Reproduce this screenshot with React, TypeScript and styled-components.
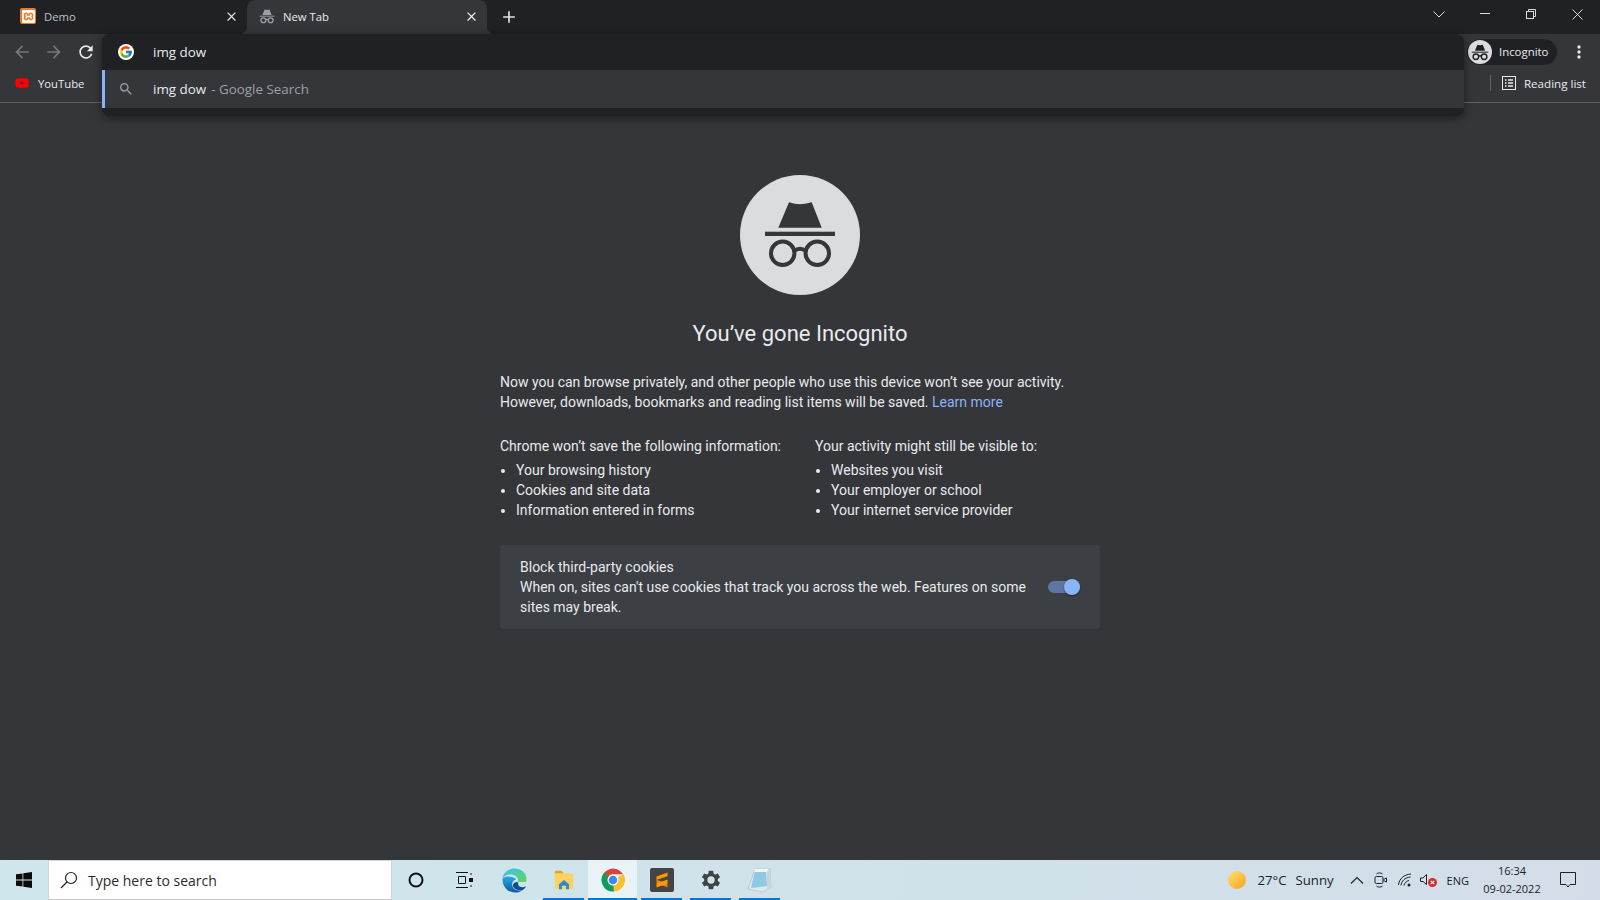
import React from "react";
import styled, { createGlobalStyle } from "styled-components";
import { SiXampp } from "react-icons/si";
import { FcGoogle } from "react-icons/fc";
import { FaYoutube } from "react-icons/fa";

const GlobalStyle = createGlobalStyle`
  html, body { margin: 0; padding: 0; background: #35363a; }
  body { font-family: Roboto, "Liberation Sans", sans-serif; overflow: hidden; }
  * { box-sizing: border-box; }
`;

const Screen = styled.div`
  position: relative;
  width: 1600px;
  height: 900px;
  display: flex;
  flex-direction: column;
  background: #35363a;
`;

/* ---------- tab strip ---------- */
const TabStrip = styled.div`
  height: 34px;
  background: #202124;
  display: flex;
  align-items: stretch;
  padding-left: 7px;
  color: #e8eaed;
  font-family: "Open Sans", "Noto Sans", sans-serif;
  font-size: 11.3px;
`;

const Tab = styled.div<{ $active?: boolean }>`
  position: relative;
  width: 240px;
  display: flex;
  align-items: center;
  padding: 0 8px 2px 13px;
  gap: 8px;
  border-radius: 8px 8px 0 0;
  color: ${(p) => (p.$active ? "#e8eaed" : "#bdc1c6")};
  background: ${(p) => (p.$active ? "#35363a" : "transparent")};
  ${(p) =>
    p.$active &&
    `
    padding-left: 12px;
    &::before, &::after {
      content: "";
      position: absolute;
      bottom: 0;
      width: 8px;
      height: 8px;
    }
    &::before { left: -8px; background: radial-gradient(circle at 0 0, #202124 8px, #35363a 8.5px); }
    &::after { right: -8px; background: radial-gradient(circle at 100% 0, #202124 8px, #35363a 8.5px); }
  `}
`;

const TabTitle = styled.span`
  flex: 1;
  white-space: nowrap;
`;

const TabIcon = styled.span<{ $tint?: string }>`
  width: 16px;
  height: 16px;
  display: flex;
  align-items: center;
  justify-content: center;
  flex: none;
  color: ${(p) => p.$tint || "#9aa0a6"};
`;

const XamppBadge = styled.span`
  width: 16px;
  height: 16px;
  border-radius: 2px;
  background: #f0762b;
  color: #fff;
  display: flex;
  align-items: center;
  justify-content: center;
`;

const NewTabButton = styled.div`
  width: 28px;
  margin-left: 8px;
  padding-bottom: 1px;
  display: flex;
  align-items: center;
  justify-content: center;
  color: #dfe1e5;
`;

const WindowControls = styled.div`
  margin-left: auto;
  display: flex;
  align-items: flex-start;
`;

const WindowButton = styled.div`
  width: 46px;
  height: 28px;
  display: flex;
  align-items: center;
  justify-content: center;
  color: #dadce0;
`;

/* ---------- toolbar ---------- */
const Toolbar = styled.div`
  height: 36px;
  display: flex;
  align-items: center;
  padding-left: 6px;
  color: #e8eaed;
`;

const NavButton = styled.div<{ $dim?: boolean }>`
  width: 32px;
  height: 28px;
  display: flex;
  align-items: center;
  justify-content: center;
  color: ${(p) => (p.$dim ? "#74777b" : "#e8eaed")};
`;

const ToolbarEnd = styled.div`
  margin-left: auto;
  display: flex;
  align-items: center;
  gap: 8px;
  padding-right: 7px;
`;

const ProfilePill = styled.div`
  width: 90px;
  height: 26px;
  border-radius: 13px;
  background: #202124;
  display: flex;
  align-items: center;
  gap: 7px;
  padding: 0 0 1px 1px;
  font-family: "Open Sans", "Noto Sans", sans-serif;
  font-size: 11.4px;
  color: #e8eaed;
`;

const ProfileAvatar = styled.span`
  width: 24px;
  height: 24px;
  margin-top: 1px;
  border-radius: 50%;
  background: #dadce0;
  display: block;
  overflow: hidden;
  padding: 3px;
`;

const MenuDots = styled.div`
  width: 28px;
  height: 28px;
  display: flex;
  align-items: center;
  justify-content: center;
  color: #e8eaed;
`;

/* ---------- bookmarks ---------- */
const BookmarkBar = styled.div`
  height: 33px;
  border-bottom: 1px solid #5f6368;
  display: flex;
  align-items: center;
  padding: 0 14px 6px 15px;
  color: #e8eaed;
  font-family: "Open Sans", "Noto Sans", sans-serif;
  font-size: 11.3px;
`;

const Bookmark = styled.div`
  display: flex;
  align-items: center;
  gap: 9px;
`;

const ReadingList = styled.div`
  margin-left: auto;
  display: flex;
  align-items: center;
  gap: 8px;
  font-size: 11.6px;
`;

const BarDivider = styled.span`
  width: 1px;
  height: 16px;
  background: #5f6368;
  margin-right: 3px;
`;

/* ---------- omnibox dropdown ---------- */
const Omnibox = styled.div`
  position: absolute;
  left: 102px;
  top: 34px;
  width: 1362px;
  height: 82px;
  background: #202124;
  border-radius: 8px;
  box-shadow: 0 2px 10px rgba(0, 0, 0, 0.45);
  color: #e8eaed;
  font-family: "Open Sans", "Noto Sans", sans-serif;
  font-size: 13.4px;
`;

const OmniInput = styled.div`
  height: 36px;
  display: flex;
  align-items: center;
  padding-left: 15px;
`;

const OmniSuggestion = styled.div`
  height: 38px;
  display: flex;
  align-items: center;
  padding-left: 12px;
  background: #35363a;
  border-left: 3px solid #8ab4f8;
`;

const OmniIcon = styled.span`
  width: 18px;
  height: 18px;
  margin-right: 18px;
  display: flex;
  align-items: center;
  justify-content: center;
  color: #9aa0a6;
`;

const Muted = styled.span`
  color: #9aa0a6;
  margin-left: 5px;
`;

/* ---------- new tab page ---------- */
const Page = styled.main`
  flex: 1;
  display: flex;
  flex-direction: column;
  align-items: center;
  padding-top: 72px;
  color: #e8eaed;
  font-size: 14px;
  line-height: 20px;
`;

const HeroIcon = styled.div`
  width: 120px;
  height: 120px;
  border-radius: 50%;
  background: #dadce0;
  overflow: hidden;
`;

const Title = styled.h1`
  margin: 24px 0 0;
  font-size: 22px;
  line-height: 30px;
  font-weight: 400;
  color: #e8eaed;
`;

const Content = styled.div`
  width: 600px;
  margin-top: 23px;
`;

const Intro = styled.p`
  margin: 0;
`;

const LearnMore = styled.a`
  color: #8ab4f8;
`;

const Columns = styled.div`
  display: grid;
  grid-template-columns: 315px 1fr;
  margin-top: 24px;
`;

const Column = styled.div``;

const ColumnHeading = styled.div`
  margin-bottom: 4px;
`;

const List = styled.ul`
  margin: 0;
  padding-left: 16px;
`;

const CookieCard = styled.div`
  margin-top: 25px;
  height: 84px;
  background: #3c3f43;
  border-radius: 4px;
  display: flex;
  align-items: center;
  padding: 0 20px 1px;
  gap: 21px;
`;

const CookieText = styled.div`
  flex: 1;
`;

const Toggle = styled.div`
  position: relative;
  width: 32px;
  height: 12px;
  border-radius: 6px;
  background: #5f76a3;
  flex: none;

  &::after {
    content: "";
    position: absolute;
    right: 0;
    top: -2px;
    width: 16px;
    height: 16px;
    border-radius: 50%;
    background: #8ab4f8;
    box-shadow: 0 1px 2px rgba(0, 0, 0, 0.4);
  }
`;

/* ---------- taskbar ---------- */
const Taskbar = styled.footer`
  height: 40px;
  background: linear-gradient(90deg, #cfe6ed 0%, #cfe3ea 40%, #d3dde9 100%);
  display: flex;
  align-items: stretch;
  color: #111;
  font-family: "Open Sans", "Noto Sans", sans-serif;
`;

const StartButton = styled.div`
  width: 48px;
  display: flex;
  align-items: center;
  justify-content: center;
`;

const SearchBox = styled.div`
  width: 344px;
  background: #fff;
  border: 1px solid #d2d6d8;
  border-bottom: 1px solid #c4c8cb;
  display: flex;
  align-items: center;
  padding-left: 11px;
  gap: 10px;
  font-size: 14px;
  color: #2b2b2b;
`;

const ToolSlot = styled.div`
  width: 48px;
  display: flex;
  align-items: center;
  justify-content: center;
`;

const AppList = styled.div`
  display: flex;
  margin-left: 2px;
`;

const TaskSlot = styled.div<{ $running?: boolean; $active?: boolean }>`
  position: relative;
  width: 49px;
  display: flex;
  align-items: center;
  justify-content: center;
  background: ${(p) => (p.$active ? "#e9f3f7" : "transparent")};

  ${(p) =>
    p.$running &&
    `
    &::after {
      content: "";
      position: absolute;
      left: ${p.$active ? 0 : 4}px;
      right: ${p.$active ? 0 : 4}px;
      bottom: 0;
      height: 2px;
      background: #0078d7;
    }
  `}
`;

const Tray = styled.div`
  margin-left: auto;
  display: flex;
  align-items: center;
  color: #222;
`;

const Weather = styled.div`
  display: flex;
  align-items: center;
  font-size: 13.2px;
  margin-right: 11px;
`;

const Sun = styled.span`
  width: 18px;
  height: 18px;
  border-radius: 50%;
  background: linear-gradient(135deg, #fde26c, #f9a11f);
  margin-right: 11px;
`;

const Temp = styled.span`
  margin-right: 9px;
`;

const TrayIcon = styled.span`
  width: 24px;
  display: flex;
  align-items: center;
  justify-content: center;
  color: #222;
`;

const Lang = styled.span`
  margin: 0 11px 0 6px;
  font-size: 11px;
`;

const Clock = styled.div`
  width: 64px;
  text-align: center;
  font-size: 11px;
  line-height: 18px;
`;

const Notify = styled.div`
  width: 48px;
  margin-right: 6px;
  display: flex;
  align-items: center;
  justify-content: center;
`;

const TaskbarEdge = styled.span`
  width: 2px;
  background: #b9c6d2;
`;

/* ---------- drawings ---------- */
const IncognitoGlyph = ({ color = "#35363a", tight }: { color?: string; tight?: boolean }) => (
  <svg viewBox={tight ? "22 22 76 72" : "0 0 120 120"} width="100%" height="100%" style={{ display: "block" }}>
    <path d="M38.300 52.700 49 27.300c4 1 7.500 2 11 2s7-1 11.700-2l10 25.400z" fill={color} />
    <rect x="25" y="56.700" width="70" height="4.300" fill={color} />
    <circle cx="42.700" cy="78.300" r="11.700" fill="none" stroke={color} strokeWidth={tight ? 6 : 4} />
    <circle cx="77.300" cy="78.300" r="11.700" fill="none" stroke={color} strokeWidth={tight ? 6 : 4} />
    <path d="M54 76c4-3 8-3 12 0" fill="none" stroke={color} strokeWidth={tight ? 6 : 4} />
  </svg>
);

const ChromeLogo = () => (
  <svg viewBox="0 0 48 48" width="24" height="24">
    <path d="M24 24 45 12.500A23 23 0 0 1 26 47z" fill="#fbc02d" />
    <path d="M24 24 26 47A23 23 0 0 1 7.700 8z" fill="#0f9d58" />
    <path d="M7.700 8A23 23 0 0 1 44 12.500H24A12 12 0 0 0 13.500 18z" fill="#db4437" />
    <circle cx="24" cy="24" r="11" fill="#fff" />
    <circle cx="24" cy="24" r="8.500" fill="#4285f4" />
  </svg>
);

const EdgeLogo = () => (
  <svg viewBox="0 0 48 48" width="25" height="25">
    <defs>
      <linearGradient id="edgeBlue" x1="0" y1="0" x2="0" y2="1">
        <stop offset="0" stopColor="#2aa9e0" />
        <stop offset="1" stopColor="#0b5aa8" />
      </linearGradient>
      <linearGradient id="edgeGreen" x1="0" y1="0" x2="1" y2="1">
        <stop offset="0" stopColor="#35c1f1" />
        <stop offset="1" stopColor="#66d65b" />
      </linearGradient>
    </defs>
    <path d="M24 1C12 1 3 9 1 20c5-7 13-9 20-7 8 2 12 9 9 14h16c1-2 1-5 1-7C47 9 36 1 24 1z" fill="url(#edgeGreen)" />
    <path d="M1 20C0 35 11 47 25 47c6 0 11-2 15-5-9 3-18 0-20-7-2-6 1-12 7-13-4-6-19-8-26-2z" fill="url(#edgeBlue)" />
    <path d="M30 27c-6 0-10 4-9 8 2 6 11 9 19 7 3-2 5-4 6-7-5 3-12 2-14-1-1-2-1-5-2-7z" fill="#0c4f95" />
  </svg>
);

const FolderIcon = () => (
  <svg viewBox="0 0 24 24" width="22" height="20">
    <path d="M1 2a1 1 0 0 1 1-1h7l2 2v2H1z" fill="#e6a21b" />
    <path d="M1 4h21a1 1 0 0 1 1 1v17a1 1 0 0 1-1 1H2a1 1 0 0 1-1-1z" fill="#fbd35e" />
    <path d="M6 17l6-5 6 5v6h-3.500v-4h-5v4H6z" fill="#2b88d8" />
  </svg>
);

const SublimeLogo = () => (
  <svg viewBox="0 0 24 24" width="24" height="24">
    <rect width="24" height="24" rx="2" fill="#444" />
    <path d="M17.500 4.500v3.700L6.500 12V8.400z" fill="#ff9800" />
    <path d="M6.500 11.800l11 3.700v3.700L6.500 15.500z" fill="#e88a00" />
    <path d="M17.500 11.500v4L6.500 19.500v-4z" fill="#ff9800" />
  </svg>
);

const NotepadIcon = () => (
  <svg viewBox="0 0 26 26" width="26" height="26">
    <path d="M8 2h15l1 19-9 4-14-3z" fill="#dfe7ea" stroke="#9db0b9" strokeWidth=".5" />
    <path d="M8 4l11 0 1 15-16 2z" fill="#8ecbe2" />
    <path d="M8 2h13l-1 3H7z" fill="#f1f4f5" />
    <path d="M20 4h3l1 17-4 1z" fill="#c9d3d8" />
  </svg>
);

const Path24 = ({ d, size = 20 }: { d: string; size?: number }) => (
  <svg viewBox="0 0 24 24" width={size} height={size} fill="currentColor">
    <path d={d} />
  </svg>
);

const closePath = "M19 6.410 17.590 5 12 10.590 6.410 5 5 6.410 10.590 12 5 17.590 6.410 19 12 13.410 17.590 19 19 17.590 13.410 12z";
const searchPath = "M15.500 14h-.79l-.28-.27A6.470 6.470 0 0 0 16 9.500 6.500 6.500 0 1 0 9.500 16c1.610 0 3.090-.59 4.230-1.570l.27.28v.79l5 4.990L20.490 19l-4.990-5zm-6 0C7.010 14 5 11.990 5 9.500S7.010 5 9.500 5 14 7.010 14 9.500 11.990 14 9.500 14z";

export default function App() {
  return (
    <Screen>
      <GlobalStyle />
      <TabStrip>
        <Tab>
          <XamppBadge><SiXampp size={13} /></XamppBadge>
          <TabTitle>Demo</TabTitle>
          <TabIcon $tint="#dadce0"><Path24 d={closePath} size={15} /></TabIcon>
        </Tab>
        <Tab $active>
          <TabIcon><IncognitoGlyph color="#9aa0a6" tight /></TabIcon>
          <TabTitle>New Tab</TabTitle>
          <TabIcon $tint="#e8eaed"><Path24 d={closePath} size={15} /></TabIcon>
        </Tab>
        <NewTabButton><Path24 d="M19 13h-6v6h-2v-6H5v-2h6V5h2v6h6z" size={20} /></NewTabButton>
        <WindowControls>
          <WindowButton>
            <svg width="12" height="7" viewBox="0 0 12 7" fill="none" stroke="currentColor"><path d="M.5.5 6 6l5.500-5.500" /></svg>
          </WindowButton>
          <WindowButton>
            <svg width="10" height="2" viewBox="0 0 10 2"><rect width="10" height="1" fill="currentColor" /></svg>
          </WindowButton>
          <WindowButton>
            <svg width="10" height="10" viewBox="0 0 10 10" fill="none" stroke="currentColor"><rect x=".5" y="2.500" width="7" height="7" /><path d="M2.500 2.500v-2h7v7h-2" /></svg>
          </WindowButton>
          <WindowButton>
            <svg width="11" height="11" viewBox="0 0 11 11" stroke="currentColor"><path d="M.5.5l10 10M10.500.5l-10 10" /></svg>
          </WindowButton>
        </WindowControls>
      </TabStrip>

      <Toolbar>
        <NavButton $dim><Path24 d="M20 11H7.830l5.590-5.590L12 4l-8 8 8 8 1.410-1.410L7.830 13H20v-2z" /></NavButton>
        <NavButton $dim><Path24 d="M12 4l-1.410 1.410L16.170 11H4v2h12.170l-5.580 5.590L12 20l8-8z" /></NavButton>
        <NavButton><Path24 d="M17.650 6.350A7.958 7.958 0 0 0 12 4c-4.420 0-7.990 3.580-7.990 8s3.570 8 7.990 8c3.730 0 6.840-2.550 7.730-6h-2.080A5.990 5.990 0 0 1 12 18c-3.310 0-6-2.690-6-6s2.690-6 6-6c1.660 0 3.140.69 4.220 1.780L13 11h7V4l-2.350 2.350z" /></NavButton>
        <ToolbarEnd>
          <ProfilePill>
            <ProfileAvatar><IncognitoGlyph color="#202124" tight /></ProfileAvatar>
            Incognito
          </ProfilePill>
          <MenuDots><Path24 d="M12 8a2 2 0 1 0 0-4 2 2 0 0 0 0 4zm0 2a2 2 0 1 0 0 4 2 2 0 0 0 0-4zm0 6a2 2 0 1 0 0 4 2 2 0 0 0 0-4z" size={20} /></MenuDots>
        </ToolbarEnd>
      </Toolbar>

      <BookmarkBar>
        <Bookmark>
          <FaYoutube size={14} color="#f00" />
          YouTube
        </Bookmark>
        <ReadingList>
          <BarDivider />
          <svg width="14" height="14" viewBox="0 0 14 14" fill="none" stroke="#e8eaed">
            <rect x=".5" y=".5" width="13" height="13" />
            <path d="M3 4h1.500M6 4h5M3 7h1.500M6 7h5M3 10h1.500M6 10h5" strokeWidth="1.400" />
          </svg>
          Reading list
        </ReadingList>
      </BookmarkBar>

      <Omnibox>
        <OmniInput>
          <OmniIcon><FcGoogle size={16} style={{ background: "#fff", borderRadius: "50%", padding: 1 }} /></OmniIcon>
          img dow
        </OmniInput>
        <OmniSuggestion>
          <OmniIcon><Path24 d={searchPath} size={16} /></OmniIcon>
          img dow <Muted>- Google Search</Muted>
        </OmniSuggestion>
      </Omnibox>

      <Page>
        <HeroIcon><IncognitoGlyph /></HeroIcon>
        <Title>You’ve gone Incognito</Title>
        <Content>
          <Intro>
            Now you can browse privately, and other people who use this device won’t see your activity.
            <br />
            However, downloads, bookmarks and reading list items will be saved. <LearnMore>Learn more</LearnMore>
          </Intro>
          <Columns>
            <Column>
              <ColumnHeading>Chrome won’t save the following information:</ColumnHeading>
              <List>
                <li>Your browsing history</li>
                <li>Cookies and site data</li>
                <li>Information entered in forms</li>
              </List>
            </Column>
            <Column>
              <ColumnHeading>Your activity might still be visible to:</ColumnHeading>
              <List>
                <li>Websites you visit</li>
                <li>Your employer or school</li>
                <li>Your internet service provider</li>
              </List>
            </Column>
          </Columns>
          <CookieCard>
            <CookieText>
              <div>Block third-party cookies</div>
              When on, sites can't use cookies that track you across the web. Features on some sites may break.
            </CookieText>
            <Toggle />
          </CookieCard>
        </Content>
      </Page>

      <Taskbar>
        <StartButton>
          <svg width="16" height="16" viewBox="0 0 16 16" fill="#0b0b0b">
            <path d="M0 2.300 6.500 1.400V7.500H0zM7.300 1.300 16 0v7.500H7.300zM0 8.400h6.500v6.200L0 13.700zM7.300 8.400H16V16l-8.700-1.200z" />
          </svg>
        </StartButton>
        <SearchBox>
          <svg width="18" height="18" viewBox="0 0 18 18" fill="none" stroke="#222" strokeWidth="1.200">
            <circle cx="11" cy="7" r="5.500" />
            <path d="M7 11 1 17" />
          </svg>
          Type here to search
        </SearchBox>
        <ToolSlot>
          <svg width="16" height="16" viewBox="0 0 16 16" fill="none" stroke="#111" strokeWidth="2"><circle cx="8" cy="8" r="6.500" /></svg>
        </ToolSlot>
        <ToolSlot>
          <svg width="17" height="16" viewBox="0 0 17 16" fill="none" stroke="#111">
            <path d="M0 .5h12M0 15.500h12M2.500 4.500h7v7h-7zM15 1v2M15 13v2" />
            <rect x="13" y="6" width="4" height="4" fill="#111" stroke="none" />
          </svg>
        </ToolSlot>
        <AppList>
          <TaskSlot><EdgeLogo /></TaskSlot>
          <TaskSlot $running><FolderIcon /></TaskSlot>
          <TaskSlot $running $active><ChromeLogo /></TaskSlot>
          <TaskSlot $running><SublimeLogo /></TaskSlot>
          <TaskSlot $running>
            <svg viewBox="0 0 24 24" width="22" height="22" fill="#3f4347">
              <path d="M19.430 12.980c.04-.32.07-.64.07-.98s-.03-.66-.07-.98l2.110-1.650c.19-.15.24-.42.12-.64l-2-3.460c-.12-.22-.39-.3-.61-.22l-2.490 1c-.52-.4-1.080-.73-1.690-.98l-.38-2.650A.488.488 0 0 0 14 2h-4c-.25 0-.46.18-.49.42l-.38 2.650c-.61.25-1.170.59-1.690.98l-2.490-1c-.23-.09-.49 0-.61.22l-2 3.460c-.13.22-.07.49.12.64l2.110 1.650c-.04.32-.07.65-.07.98s.03.66.07.98l-2.110 1.650c-.19.15-.24.42-.12.64l2 3.460c.12.22.39.3.61.22l2.490-1c.52.4 1.080.73 1.690.98l.38 2.650c.03.24.24.42.49.42h4c.25 0 .46-.18.49-.42l.38-2.650c.61-.25 1.170-.59 1.690-.98l2.490 1c.23.09.49 0 .61-.22l2-3.460c.12-.22.07-.49-.12-.64l-2.110-1.650zM12 16a4 4 0 1 1 0-8 4 4 0 0 1 0 8z" />
            </svg>
          </TaskSlot>
          <TaskSlot $running><NotepadIcon /></TaskSlot>
        </AppList>

        <Tray>
          <Weather>
            <Sun />
            <Temp>27°C</Temp>
            Sunny
          </Weather>
          <TrayIcon>
            <svg width="14" height="8" viewBox="0 0 14 8" fill="none" stroke="#222" strokeWidth="1.200"><path d="M1 7.500 7 1.500l6 6" /></svg>
          </TrayIcon>
          <TrayIcon>
            <svg width="14" height="16" viewBox="0 0 14 16" fill="none" stroke="#222">
              <path d="M2.500 2C4 .5 7 .5 8.500 2M2.500 14c1.500 1.500 4.500 1.500 6 0" />
              <rect x="1" y="4.500" width="8" height="7" rx="1.500" />
              <path d="M9.500 7.500l3-1.500v4l-3-1.500" />
            </svg>
          </TrayIcon>
          <TrayIcon>
            <svg width="14" height="14" viewBox="0 0 14 14" fill="none" stroke="#222">
              <path d="M.5 12C1 6 6 1.500 13 1M3 12.500C3.500 8 7 4.500 12.500 4M6 12.500C6.500 10 8.500 8 11 7.500" />
              <circle cx="11" cy="12" r="1.500" fill="#222" stroke="none" />
            </svg>
          </TrayIcon>
          <TrayIcon>
            <svg width="18" height="15" viewBox="0 0 18 15">
              <path d="M.5 5h2.500L6.500 1.500v10L3 8.500H.5z" fill="none" stroke="#222" />
              <circle cx="12.500" cy="9.500" r="4.500" fill="#d92b2b" />
              <path d="M10.800 7.800l3.400 3.400M14.200 7.800l-3.400 3.400" stroke="#fff" strokeWidth="1.200" />
            </svg>
          </TrayIcon>
          <Lang>ENG</Lang>
          <Clock>16:34<br />09-02-2022</Clock>
          <Notify>
            <svg width="16" height="16" viewBox="0 0 16 16" fill="none" stroke="#222"><path d="M.5.500h15v12H10L8 15l-2-2.500H.5z" /></svg>
          </Notify>
          <TaskbarEdge />
        </Tray>
      </Taskbar>
    </Screen>
  );
}
